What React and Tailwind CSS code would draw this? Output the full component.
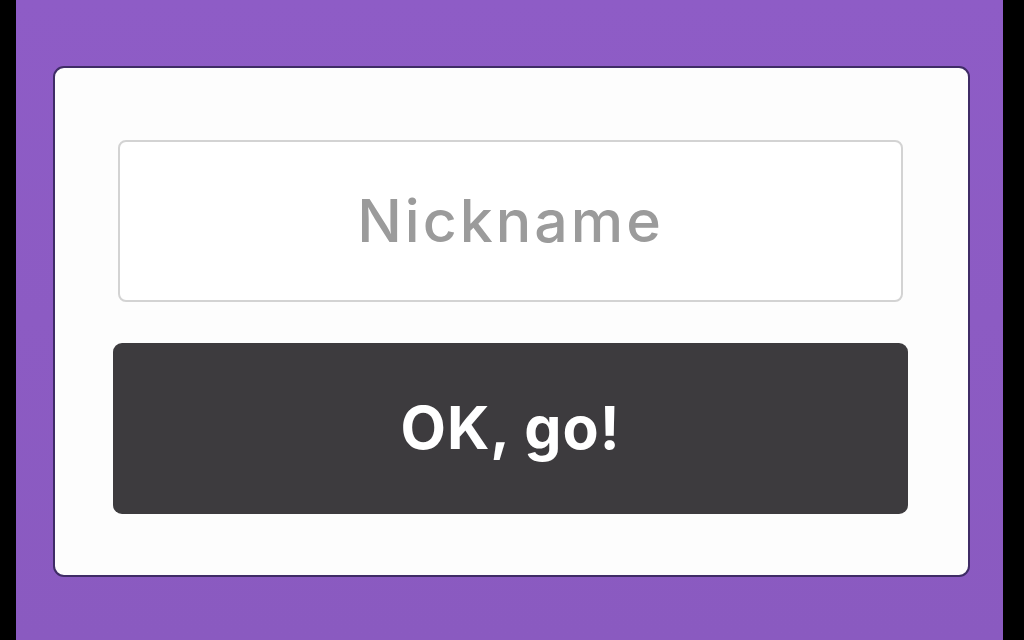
export default function App() {
  return (
    <div className="flex h-[640px] w-[1024px] overflow-hidden bg-black" style={{ fontFamily: 'Inter, "Noto Sans", sans-serif' }}>
      <div className="w-[16px] shrink-0 bg-black" />
      <div className="flex flex-1 flex-col bg-gradient-to-b from-[#8e5cc6] to-[#8a5ac0] pl-[37px] pr-[33px] pt-[66px] pb-[63px]">
        <div className="flex flex-1 flex-col rounded-[11px] border-2 border-[#3f2c66] bg-[#fdfdfd] pl-[58px] pr-[60px] pt-[72px] pb-[61px]">
          <div className="mx-[5px] flex h-[162px] items-center justify-center rounded-[8px] border-2 border-[#d3d3d3] bg-white">
            <span className="text-[59px] font-medium tracking-[3px] text-[#9b9b9b]">Nickname</span>
          </div>
          <button className="mt-[41px] flex h-[171px] items-center justify-center rounded-[9px] bg-[#3d3b3e]">
            <span className="text-[59px] font-bold tracking-[1px] text-white">OK, go!</span>
          </button>
        </div>
      </div>
      <div className="w-[21px] shrink-0 bg-black" />
    </div>
  );
}
